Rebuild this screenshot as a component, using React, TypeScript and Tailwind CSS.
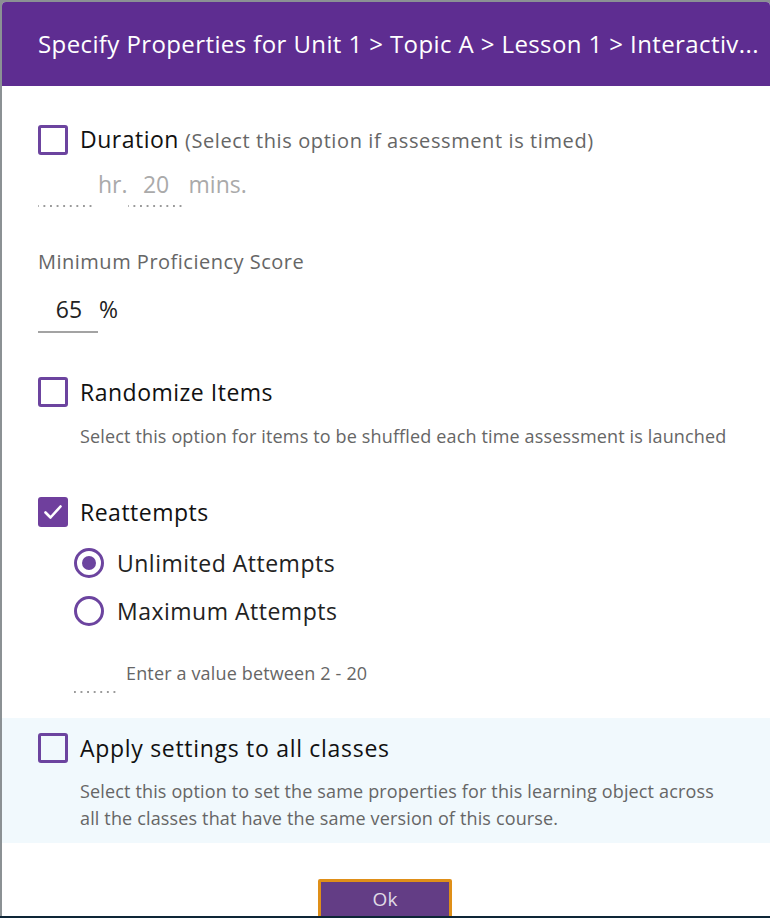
import React from "react";

const dots =
  "bg-[linear-gradient(to_right,#9a9a9a_0px,#9a9a9a_2px,transparent_2px)] bg-[length:6.6px_2px] bg-repeat-x bg-bottom";

function Box({ checked = false }: { checked?: boolean }) {
  return checked ? (
    <div className="w-[30px] h-[30px] rounded-[3px] bg-[#6f3f9d] flex items-center justify-center shrink-0">
      <svg width="20" height="16" viewBox="0 0 20 16" fill="none">
        <path d="M2.5 8.5 L7.5 13.5 L17.5 2.5" stroke="white" strokeWidth="2.6" strokeLinecap="round" strokeLinejoin="round" />
      </svg>
    </div>
  ) : (
    <div className="w-[30px] h-[30px] rounded-[3px] border-[3px] border-[#6c449f] shrink-0" />
  );
}

function Radio({ checked = false }: { checked?: boolean }) {
  return (
    <div className="w-[30px] h-[30px] rounded-full border-[3px] border-[#6c449f] flex items-center justify-center shrink-0">
      {checked && <div className="w-[14px] h-[14px] rounded-full bg-[#6c449f]" />}
    </div>
  );
}

const label = "text-[23px] leading-[30px] tracking-[0.5px] pb-[1px]";

export default function App() {
  return (
    <div className="w-[770px] h-[918px] overflow-hidden bg-[#8b9194] flex flex-col [font-family:'Open_Sans',sans-serif]">
      <div className="ml-[2px] mt-[2px] h-[914px] bg-white rounded-t-[4px] overflow-hidden flex flex-col">
        <div className="h-[84px] shrink-0 bg-[#5e2d91] pl-[36px] flex items-center">
          <span className="text-white text-[24px] font-medium tracking-[0.4px] whitespace-nowrap">
            Specify Properties for Unit 1 &gt; Topic A &gt; Lesson 1 &gt; Interactiv...
          </span>
        </div>

        <div className="pl-[36px] flex flex-col">
          {/* Duration */}
          <div className="mt-[39px] h-[30px] flex items-center gap-[12px]">
            <Box />
            <div className="flex items-baseline whitespace-nowrap">
              <span className={`${label} text-[#111]`}>Duration</span>
              <span className="ml-[6px] text-[20px] tracking-[0.6px] text-[#666]">(Select this option if assessment is timed)</span>
            </div>
          </div>
          <div className="mt-[14px] flex items-start text-[23px] text-[#aaa] leading-[30px]">
            <div className={`w-[57px] h-[38px] ${dots}`} />
            <span className="ml-[3px]">hr.</span>
            <div className={`w-[57px] h-[38px] text-center ${dots}`}>20</div>
            <span className="ml-[4px]">mins.</span>
          </div>

          {/* Minimum proficiency */}
          <div className="mt-[43px] text-[20px] tracking-[0.5px] leading-[24px] text-[#666]">Minimum Proficiency Score</div>
          <div className="mt-[20px] flex items-start text-[23px] leading-[30px] text-[#222]">
            <div className="w-[60px] h-[39px] border-b-2 border-[#a3a3a3] text-center pl-[2px]">65</div>
            <span className="ml-[1px]">%</span>
          </div>

          {/* Randomize */}
          <div className="mt-[44px] h-[30px] flex items-center gap-[12px]">
            <Box />
            <span className={`${label} text-[#111]`}>Randomize Items</span>
          </div>
          <div className="mt-[17px] pl-[42px] text-[18px] tracking-[0.15px] leading-[24px] text-[#666] whitespace-nowrap">
            Select this option for items to be shuffled each time assessment is launched
          </div>

          {/* Reattempts */}
          <div className="mt-[49px] h-[30px] flex items-center gap-[12px]">
            <Box checked />
            <span className={`${label} text-[#111]`}>Reattempts</span>
          </div>
          <div className="mt-[21px] ml-[36px] h-[30px] flex items-center gap-[13px]">
            <Radio checked />
            <span className={`${label} text-[#222]`}>Unlimited Attempts</span>
          </div>
          <div className="mt-[18px] ml-[36px] h-[30px] flex items-center gap-[13px]">
            <Radio />
            <span className={`${label} text-[#222]`}>Maximum Attempts</span>
          </div>
          <div className="mt-[35px] ml-[36px] flex items-start">
            <div className={`w-[46px] h-[32px] ${dots}`} />
            <span className="ml-[6px] text-[18px] tracking-[0.15px] leading-[24px] text-[#666]">Enter a value between 2 - 20</span>
          </div>
        </div>

        {/* Apply settings */}
        <div className="mt-[25px] bg-[#f1f9fd] pl-[36px] pt-[15px] pb-[11px]">
          <div className="h-[30px] flex items-center gap-[12px]">
            <Box />
            <span className={`${label} tracking-[0.7px] text-[#111]`}>Apply settings to all classes</span>
          </div>
          <div className="mt-[15px] pl-[42px] text-[18px] tracking-[0.15px] leading-[27px] text-[#666] whitespace-nowrap">
            Select this option to set the same properties for this learning object across
            <br />
            all the classes that have the same version of this course.
          </div>
        </div>

        <div className="mt-[36px] flex justify-center">
          <button className="ml-[-2px] w-[134px] h-[42px] bg-[#633d85] border-[3px] border-[#df8f18] rounded-[2px] text-[#e0dbe6] text-[19px] flex items-center justify-center pb-[2px]">
            Ok
          </button>
        </div>
      </div>
      <div className="h-[2px] bg-[#0e2637]" />
    </div>
  );
}
